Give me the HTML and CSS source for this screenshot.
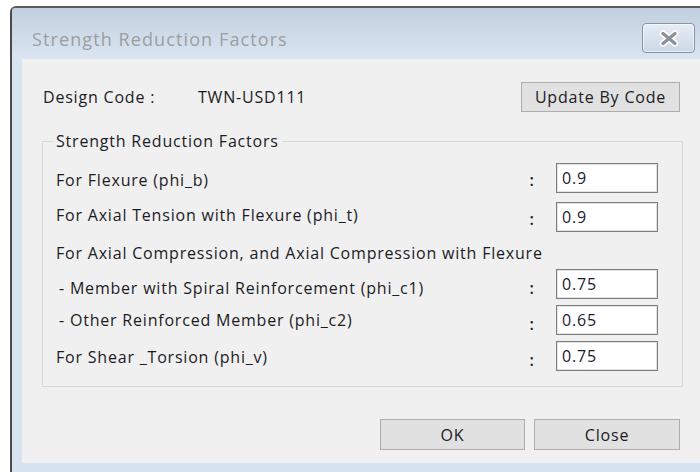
FILE: index.html
```html
<!DOCTYPE html>
<html lang="en">
<head>
<meta charset="utf-8">
<title>Strength Reduction Factors</title>
<link rel="stylesheet" href="styles.css">
</head>
<body>
<div class="window">
  <div class="titlebar">
    <span class="title">Strength Reduction Factors</span>
    <button class="close-x" aria-label="Close">
      <svg width="22" height="17" viewBox="0 0 22 17">
        <path d="M5 3.5 L17 13.5 M17 3.5 L5 13.5" stroke="#ffffff" stroke-width="6.4" stroke-linecap="round"/>
        <path d="M5 3.5 L17 13.5 M17 3.5 L5 13.5" stroke="#8e9298" stroke-width="3.4" stroke-linecap="round"/>
      </svg>
    </button>
  </div>
  <div class="client">
    <div class="code-row">
      <span class="code-label">Design Code :</span>
      <span class="code-value">TWN-USD111</span>
      <button class="btn btn-update">Update By Code</button>
    </div>
    <fieldset class="group">
      <legend>Strength Reduction Factors</legend>
      <div class="row gap-first">
        <span class="label lower-2">For Flexure (phi_b)</span><span class="colon">:</span><input class="field" value="0.9">
      </div>
      <div class="row gap-9">
        <span class="label raise-2">For Axial Tension with Flexure (phi_t)</span><span class="colon">:</span><input class="field" value="0.9">
      </div>
      <div class="row gap-7">
        <span class="label raise-1">For Axial Compression, and Axial Compression with Flexure</span>
      </div>
      <div class="row">
        <span class="label sub lower-4">- Member with Spiral Reinforcement (phi_c1)</span><span class="colon low">:</span><input class="field" value="0.75">
      </div>
      <div class="row gap-6">
        <span class="label sub">- Other Reinforced Member (phi_c2)</span><span class="colon low">:</span><input class="field" value="0.65">
      </div>
      <div class="row gap-6">
        <span class="label lower-1">For Shear _Torsion (phi_v)</span><span class="colon low">:</span><input class="field" value="0.75">
      </div>
    </fieldset>
    <div class="actions">
      <button class="btn btn-ok">OK</button>
      <button class="btn btn-close">Close</button>
    </div>
  </div>
</div>
</body>
</html>
```
FILE: styles.css
```css
html, body {
  margin: 0;
  padding: 0;
  background: #ffffff;
}

body {
  font-family: "Open Sans", "Noto Sans", sans-serif;
  font-size: 16px;
  letter-spacing: 0.8px;
  color: #1b1b26;
}

/* dialog frame */
.window {
  margin: 6px 0 0 10px;
  width: 690px;
  height: 466px;
  box-sizing: border-box;
  border-left: 2px solid #4a4a4a;
  border-top: 2px solid #5c5c5c;
  border-top-left-radius: 6px;
  background: #d7e3f1;
  display: flex;
  flex-direction: column;
  overflow: hidden;
}

.titlebar {
  height: 51px;
  flex: none;
  display: flex;
  align-items: flex-start;
  background: linear-gradient(#c1cfdd, #dae5f1);
}

.title {
  margin: 21px 0 0 20px;
  font-size: 18px;
  letter-spacing: 1.1px;
  line-height: 20px;
  color: #9c9ea2;
}

.close-x {
  margin: 15px 5px 0 auto;
  width: 53px;
  height: 30px;
  padding: 0;
  box-sizing: border-box;
  border: 1px solid #8395ab;
  border-radius: 4px;
  background: linear-gradient(#e6edf5, #ccd8e6);
  box-shadow: inset 0 0 0 1px rgba(255, 255, 255, 0.6);
  display: flex;
  align-items: center;
  justify-content: center;
}

.close-x svg {
  display: block;
}

/* client area */
.client {
  margin-left: 10px;
  height: 404px;
  background: #f0f0f0;
  display: flex;
  flex-direction: column;
}

.code-row {
  display: flex;
  align-items: center;
  height: 30px;
  margin-top: 23px;
  padding: 0 20px 0 21px;
}

.code-label {
  width: 155px;
}

.btn {
  font: inherit;
  letter-spacing: inherit;
  color: inherit;
  box-sizing: border-box;
  border: 1px solid #adadad;
  background: #e1e1e1;
  padding: 0;
}

.btn-update {
  margin-left: auto;
  width: 159px;
  height: 30px;
}

/* group box */
.group {
  margin: 19px 17px 0 20px;
  padding: 0 0 15px 0;
  border: 1px solid #d9d9d9;
  min-width: 0;
}

.group legend {
  margin-left: 10px;
  padding: 0 3px;
  line-height: 20px;
}

.row {
  display: flex;
  align-items: center;
  height: 30px;
  padding: 0 24px 0 13px;
}

.gap-first { margin-top: 12px; }
.gap-9 { margin-top: 9px; }
.gap-7 { margin-top: 7px; }
.gap-6 { margin-top: 6px; }

.label {
  flex: 1;
  white-space: nowrap;
}

.label.sub {
  padding-left: 3px;
}

/* fine vertical placement of labels within a centred row */
.lower-1 { padding-top: 2px; }
.lower-2 { padding-top: 4px; }
.lower-4 { padding-top: 8px; }
.raise-1 { padding-bottom: 2px; }
.raise-2 { padding-bottom: 4px; }

.colon {
  width: 10px;
  text-align: center;
  margin-right: 19px;
  padding-top: 4px;
  font-weight: 600;
}

.colon.low {
  padding-top: 8px;
}

.field {
  width: 102px;
  height: 30px;
  box-sizing: border-box;
  border: 1px solid #7e7e7e;
  box-shadow: inset 0 0 0 1px #e2e2e2;
  background: #ffffff;
  padding: 0 5px;
  font: inherit;
  letter-spacing: inherit;
  color: #1b1b30;
}

/* dialog buttons */
.actions {
  display: flex;
  justify-content: flex-end;
  gap: 9px;
  margin-top: 32px;
  padding-right: 20px;
}

.btn-ok {
  width: 145px;
  height: 31px;
}

.btn-close {
  width: 146px;
  height: 31px;
}
```
